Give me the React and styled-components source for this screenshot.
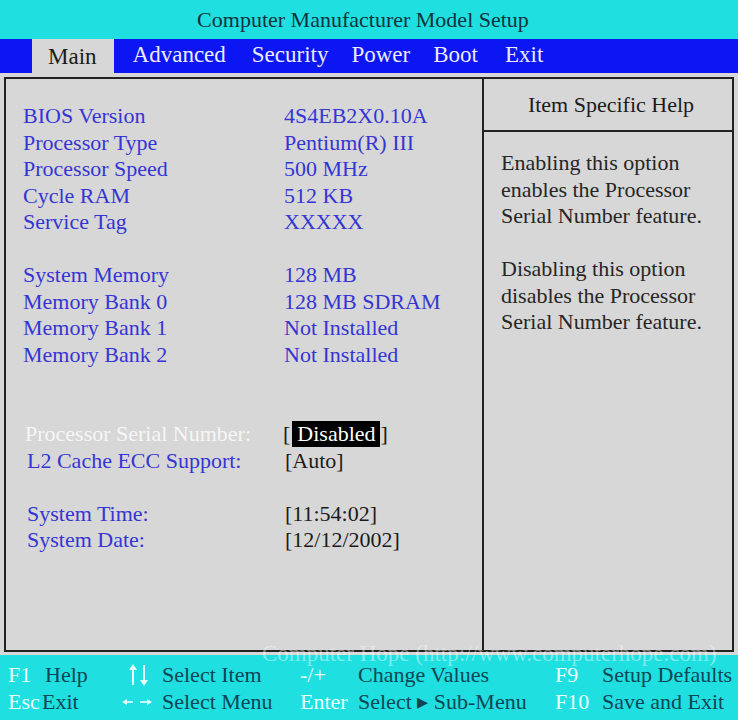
import React from 'react';
import styled, { createGlobalStyle } from 'styled-components';

const colors = {
  cyan: '#1fdfe0',
  blue: '#0b16f2',
  gray: '#d7d7d7',
  label: '#3535d4',
  dark: '#1b1b1b',
  footText: '#0d4755',
  key: '#e9ffff',
};

const GlobalStyle = createGlobalStyle`
  * { box-sizing: border-box; }
  body {
    margin: 0;
    background: ${colors.gray};
    font-family: 'Liberation Serif', 'Times New Roman', serif;
  }
`;

const Screen = styled.div`
  position: relative;
  width: 738px;
  height: 720px;
  display: flex;
  flex-direction: column;
  background: ${colors.gray};
  overflow: hidden;
`;

const TitleBar = styled.div`
  height: 39px;
  background: ${colors.cyan};
  color: #12333c;
  font-size: 22px;
  display: flex;
  align-items: center;
  justify-content: center;
  padding: 1px 12px 0 0;
`;

const MenuBar = styled.div`
  height: 34px;
  background: ${colors.blue};
  display: flex;
  align-items: stretch;
`;

const MenuItem = styled.div`
  font-size: 23px;
  display: flex;
  align-items: center;
  color: ${(p) => (p.$active ? colors.dark : '#ecebff')};
  background: ${(p) => (p.$active ? colors.gray : 'transparent')};
  padding: ${(p) => (p.$active ? '2px 17px 0 16px' : '0 0 3px')};
  margin-left: ${(p) => p.$ml}px;
`;

const Body = styled.div`
  flex: 1;
  padding: 4px 4px 3px 4px;
  display: flex;
`;

const Panel = styled.div`
  flex: 1;
  border: 2px solid #222;
  display: grid;
  grid-template-columns: 476px 1fr;
`;

const MainColumn = styled.div`
  padding: 24px 0 0 17px;
  font-size: 22px;
`;

const Group = styled.div`
  margin-top: ${(p) => p.$gap || 0}px;
`;

const Row = styled.div`
  display: grid;
  grid-template-columns: ${(p) => 260 - (p.$indent || 0)}px 1fr;
  padding-left: ${(p) => p.$indent || 0}px;
  height: 26.5px;
  line-height: 26.5px;
  white-space: nowrap;
`;

const Label = styled.span`
  color: ${(p) => (p.$selected ? '#f6f6f6' : colors.label)};
`;

const Value = styled.span`
  color: ${(p) => (p.$setting ? colors.dark : colors.label)};
  padding-left: ${(p) => p.$shift || 0}px;
`;

const Highlight = styled.span`
  display: inline-block;
  background: #000;
  color: #fff;
  padding: 0 4px 0 5px;
  margin: 0 1px 0 2px;
  line-height: 26px;
`;

const HelpColumn = styled.div`
  border-left: 2px solid #222;
  display: flex;
  flex-direction: column;
`;

const HelpHeader = styled.div`
  height: 53px;
  border-bottom: 2px solid #222;
  display: flex;
  align-items: center;
  justify-content: center;
  font-size: 22px;
  color: ${colors.dark};
  padding: 0 0 0 6px;
`;

const HelpText = styled.div`
  padding: 18px 0 0 17px;
  font-size: 22px;
  line-height: 26.5px;
  color: #262626;

  p {
    margin: 0 0 26.5px;
  }
`;

const Footer = styled.div`
  height: 65px;
  background: ${colors.cyan};
  padding: 6px 0 0 8px;
  display: grid;
  grid-template-columns: 34px 78px 42px 138px 58px 197px 47px 1fr;
  grid-auto-rows: 27px;
  align-items: center;
  font-size: 22px;
  line-height: 1;
  white-space: nowrap;
`;

const Key = styled.span`
  color: ${colors.key};
`;

const Desc = styled.span`
  color: ${colors.footText};
  margin-left: ${(p) => p.$shift || 0}px;
`;

const ArrowIcon = styled.svg`
  display: block;
  margin-left: ${(p) => p.$shift || 0}px;
`;

// faint site watermark stamped across the panel edge
const Watermark = styled.div`
  position: absolute;
  left: 262px;
  top: 644px;
  font-size: 23px;
  line-height: 19px;
  color: rgba(255, 255, 255, 0.42);
  white-space: nowrap;
  pointer-events: none;
`;

const menus = [
  ['Main', 32],
  ['Advanced', 19],
  ['Security', 26],
  ['Power', 23],
  ['Boot', 23],
  ['Exit', 27],
];

const info = [
  [
    ['BIOS Version', '4S4EB2X0.10A'],
    ['Processor Type', 'Pentium(R) III'],
    ['Processor Speed', '500 MHz'],
    ['Cycle RAM', '512 KB'],
    ['Service Tag', 'XXXXX'],
  ],
  [
    ['System Memory', '128 MB'],
    ['Memory Bank 0', '128 MB SDRAM'],
    ['Memory Bank 1', 'Not Installed'],
    ['Memory Bank 2', 'Not Installed'],
  ],
];

function UpDownArrows() {
  return (
    <ArrowIcon width="26" height="24" viewBox="0 0 26 24" $shift={6}>
      <g stroke={colors.key} strokeWidth="2" fill={colors.key}>
        <line x1="7" y1="22" x2="7" y2="5" />
        <polygon points="3,7 7,1 11,7" stroke="none" />
        <line x1="18" y1="2" x2="18" y2="19" />
        <polygon points="14,17 18,23 22,17" stroke="none" />
      </g>
    </ArrowIcon>
  );
}

function LeftRightArrows() {
  return (
    <ArrowIcon width="32" height="10" viewBox="0 0 32 10" $shift={1}>
      <g stroke={colors.key} strokeWidth="1.6" fill={colors.key}>
        <line x1="4" y1="5" x2="12" y2="5" />
        <polygon points="1,5 6,2 6,8" stroke="none" />
        <line x1="19" y1="5" x2="27" y2="5" />
        <polygon points="31,5 26,2 26,8" stroke="none" />
      </g>
    </ArrowIcon>
  );
}

export default function App() {
  return (
    <Screen>
      <GlobalStyle />
      <TitleBar>Computer Manufacturer Model Setup</TitleBar>

      <MenuBar>
        {menus.map(([m, ml]) => (
          <MenuItem key={m} $ml={ml} $active={m === 'Main'}>{m}</MenuItem>
        ))}
      </MenuBar>

      <Body>
        <Panel>
          <MainColumn>
            {info.map((group, i) => (
              <Group key={i} $gap={i ? 26.5 : 0}>
                {group.map(([label, value]) => (
                  <Row key={label}>
                    <Label>{label}</Label>
                    <Value $shift={1}>{value}</Value>
                  </Row>
                ))}
              </Group>
            ))}

            <Group $gap={53}>
              <Row $indent={2}>
                <Label $selected>Processor Serial Number:</Label>
                <Value $setting>[<Highlight>Disabled</Highlight>]</Value>
              </Row>
              <Row $indent={4}>
                <Label>L2 Cache ECC Support:</Label>
                <Value $setting $shift={2}>[Auto]</Value>
              </Row>
            </Group>

            <Group $gap={26.5}>
              <Row $indent={4}>
                <Label>System Time:</Label>
                <Value $setting $shift={2}>[11:54:02]</Value>
              </Row>
              <Row $indent={4}>
                <Label>System Date:</Label>
                <Value $setting $shift={2}>[12/12/2002]</Value>
              </Row>
            </Group>
          </MainColumn>

          <HelpColumn>
            <HelpHeader>Item Specific Help</HelpHeader>
            <HelpText>
              <p>Enabling this option<br />enables the Processor<br />Serial Number feature.</p>
              <p>Disabling this option<br />disables the Processor<br />Serial Number feature.</p>
            </HelpText>
          </HelpColumn>
        </Panel>
      </Body>

      <Footer>
        <Key>F1</Key>
        <Desc $shift={3}>Help</Desc>
        <UpDownArrows />
        <Desc>Select Item</Desc>
        <Key>-/+</Key>
        <Desc>Change Values</Desc>
        <Key>F9</Key>
        <Desc>Setup Defaults</Desc>

        <Key>Esc</Key>
        <Desc>Exit</Desc>
        <LeftRightArrows />
        <Desc>Select Menu</Desc>
        <Key>Enter</Key>
        <Desc>Select ▸ Sub-Menu</Desc>
        <Key>F10</Key>
        <Desc>Save and Exit</Desc>
      </Footer>

      <Watermark>Computer Hope (http://www.computerhope.com)</Watermark>
    </Screen>
  );
}
